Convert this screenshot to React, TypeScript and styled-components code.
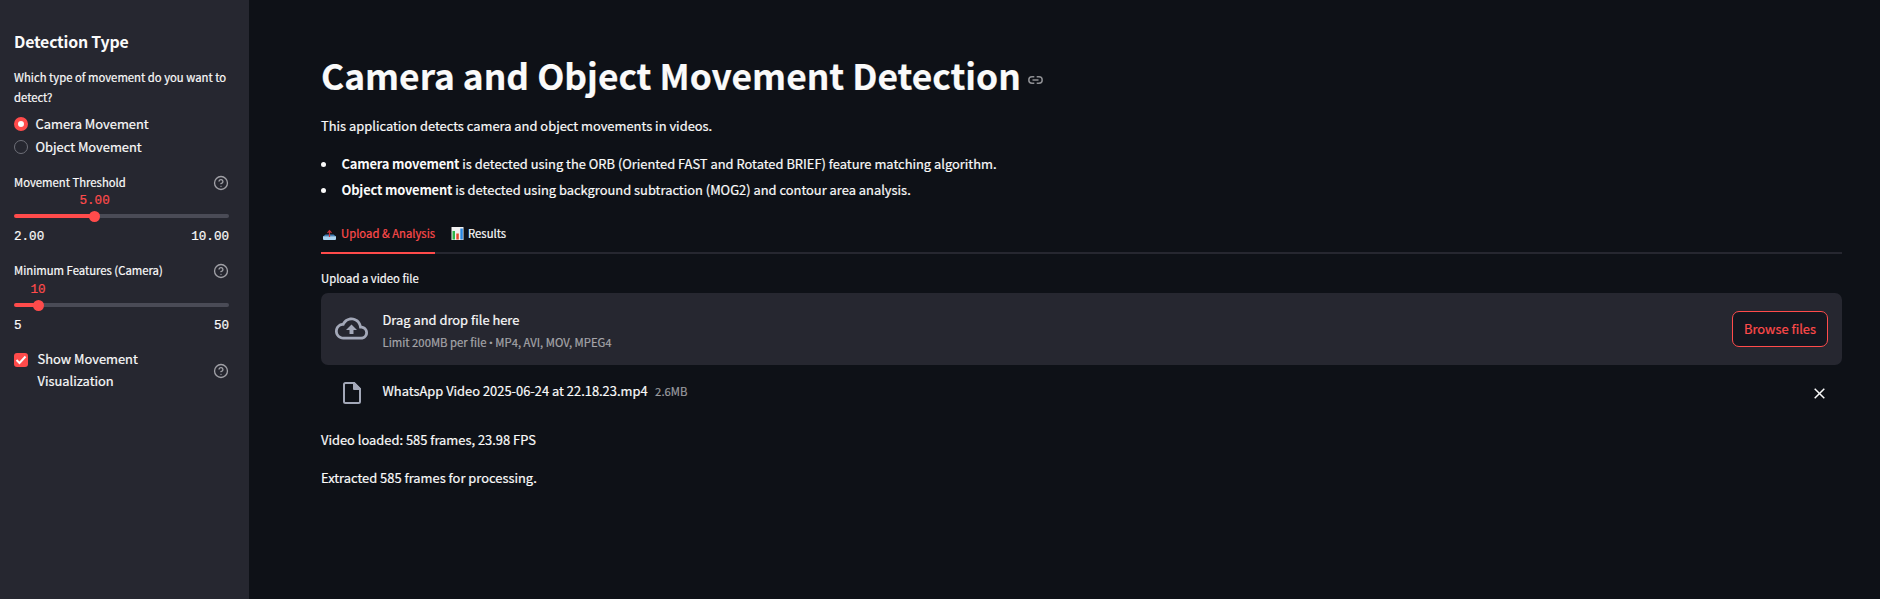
import React from "react";
import styled, { createGlobalStyle } from "styled-components";

const Global = createGlobalStyle`
  *, *::before, *::after { box-sizing: border-box; }
  html, body { margin: 0; background: #0e1117; }
  body {
    font-family: "Noto Sans CJK SC", "Open Sans", sans-serif;
    color: #fafafa;
    font-size: 12.9px;
    -webkit-text-stroke: 0.2px;
  }
  h1, h2, p, ul { margin: 0; padding: 0; font-weight: 400; }
`;

const Page = styled.div`
  display: flex;
  height: 599px;
  overflow: hidden;
`;

const Sidebar = styled.aside`
  width: 249px;
  flex: none;
  padding: 31px 20px 0 14px;
  background: #262730;
`;

const SideTitle = styled.h2`
  font-size: 15.9px;
  line-height: 22px;
  font-weight: 700;
  letter-spacing: -0.22px;
  -webkit-text-stroke: 0;
`;

const Label = styled.div`
  font-size: 11.3px;
  line-height: 20px;
`;

const Question = styled(Label)`
  margin-top: 14px;
`;

const Options = styled.div`
  margin-top: 5px;
`;

const Option = styled.div`
  display: flex;
  align-items: center;
  gap: 7.5px;
  height: 23px;
`;

const Radio = styled.span<{ $on?: boolean }>`
  width: 14px;
  height: 14px;
  border-radius: 50%;
  border: ${p => (p.$on ? "4px solid #ff4b4b" : "1px solid #6e6f78")};
  background: ${p => (p.$on ? "#fafafa" : "transparent")};
`;

const Sliders = styled.div`
  display: grid;
  gap: 16px;
  margin-top: 14px;
`;

const LabelRow = styled.div`
  display: flex;
  justify-content: space-between;
  align-items: center;
  height: 20px;
`;

const Value = styled.div<{ $at: number; $gap: number }>`
  width: ${p => p.$at * 2}px;
  margin-top: ${p => p.$gap}px;
  text-align: center;
  color: #ff4b4b;
  font: 12.6px/14px "Liberation Mono", monospace;
`;

const Track = styled.div<{ $at: number }>`
  display: flex;
  align-items: center;
  height: 4px;
  margin-top: 6px;
  border-radius: 2px;
  background: linear-gradient(to right, #ff4b4b ${p => p.$at}px, #4a4b56 ${p => p.$at}px);
`;

const Thumb = styled.span<{ $at: number }>`
  width: 11px;
  height: 11px;
  margin-left: ${p => p.$at - 5.5}px;
  border-radius: 50%;
  background: #ff4b4b;
`;

const Range = styled.div`
  display: flex;
  justify-content: space-between;
  margin-top: 12px;
  font: 12.6px/14px "Liberation Mono", monospace;
`;

const CheckRow = styled.div`
  display: flex;
  align-items: center;
  margin-top: 15px;
`;

const Check = styled.span`
  display: flex;
  align-self: flex-start;
  width: 14px;
  height: 14px;
  margin: 5px 9.5px 0 0;
  border-radius: 3px;
  background: #ff4b4b;
`;

const CheckLabel = styled.span`
  flex: 1;
  line-height: 22px;
`;

const HelpSvg = styled.svg`
  margin-top: 2px;
`;

const Main = styled.main`
  flex: 1;
  padding: 50px 38px 0 72px;
`;

const TitleRow = styled.div`
  display: flex;
  align-items: center;
  gap: 7px;
  height: 50px;
`;

const Title = styled.h1`
  font-size: 35.35px;
  line-height: 50px;
  font-weight: 700;
  -webkit-text-stroke: 0.2px;
`;

const LinkSvg = styled.svg`
  margin-top: 10px;
`;

const Text = styled.p<{ $top: number }>`
  margin-top: ${p => p.$top}px;
  line-height: 22px;
`;

const List = styled.ul`
  margin-top: 14px;
  list-style: none;
`;

const Item = styled.li`
  display: flex;
  align-items: center;
  line-height: 26px;
  white-space: pre;
  &::before {
    content: "";
    width: 5px;
    height: 5px;
    margin-right: 15.5px;
    border-radius: 50%;
    background: #fafafa;
  }
  b {
    letter-spacing: -0.18px;
    -webkit-text-stroke: 0;
  }
`;

const Tabs = styled.div`
  display: flex;
  gap: 16px;
  height: 40px;
  margin-top: 11px;
  border-bottom: 2px solid #262730;
`;

const Tab = styled.div<{ $on?: boolean }>`
  display: flex;
  align-items: center;
  gap: 4px;
  height: 40px;
  font-size: 11.3px;
  color: ${p => (p.$on ? "#ff4b4b" : "#fafafa")};
  border-bottom: 2px solid ${p => (p.$on ? "#ff4b4b" : "transparent")};
`;

const UploadLabel = styled(Label)`
  margin-top: 14px;
`;

const Dropzone = styled.div`
  display: flex;
  align-items: center;
  height: 72px;
  margin-top: 5px;
  padding: 0 14px;
  border-radius: 7px;
  background: #262730;
`;

const DropText = styled.div`
  flex: 1;
  margin-left: 14.5px;
  padding-top: 1px;
  line-height: 23px;
`;

const Hint = styled.div`
  font-size: 11.3px;
  height: 21px;
  line-height: 23px;
  color: #a5a5a9;
`;

const Bullet = styled.span`
  font-family: Roboto, sans-serif;
`;

const Browse = styled.button`
  width: 96px;
  height: 36px;
  padding: 0 0 1px;
  border: 1px solid #ff4b4b;
  border-radius: 7px;
  background: #131720;
  color: #ff4b4b;
  font: inherit;
`;

const FileRow = styled.div`
  display: flex;
  align-items: center;
  height: 22px;
  margin-top: 17px;
  padding: 0 17.5px 0 22px;
`;

const FileName = styled.span`
  margin: 0 0 6px 21.5px;
`;

const FileSize = styled.span`
  flex: 1;
  margin: 0 0 4px 7.5px;
  font-size: 11.3px;
  color: #9c9da0;
`;

const CloudSvg = styled.svg`
  margin-bottom: 2px;
`;

const HelpIcon = () => (
  <HelpSvg width="16" height="16" viewBox="0 0 24 24" fill="none" stroke="#a0a0a6" strokeWidth="2" strokeLinecap="round" strokeLinejoin="round">
    <circle cx="12" cy="12" r="9.7" />
    <path d="M9.09 9a3 3 0 0 1 5.83 1c0 2-3 3-3 3M12 17h.01" />
  </HelpSvg>
);

const CloudIcon = () => (
  <CloudSvg width="33" height="33" viewBox="0 0 24 24" fill="#a3a8b8">
    <path d="M19.35 10.04C18.67 6.59 15.64 4 12 4 9.11 4 6.6 5.64 5.35 8.04 2.34 8.36 0 10.91 0 14c0 3.31 2.69 6 6 6h13c2.76 0 5-2.24 5-5 0-2.64-2.05-4.78-4.65-4.96zM19 18H6c-2.21 0-4-1.79-4-4 0-2.05 1.53-3.76 3.56-3.97l1.07-.11.5-.95C8.08 7.14 9.94 6 12 6c2.62 0 4.88 1.86 5.39 4.43l.3 1.5 1.53.11c1.56.1 2.78 1.41 2.78 2.96 0 1.65-1.35 3-3 3zM8 13h2.55v3h2.9v-3H16l-4-4z" />
  </CloudSvg>
);

const FileIcon = () => (
  <svg width="18" height="22" viewBox="0 0 18 22" fill="none" stroke="#a3a8b8" strokeWidth="2" strokeLinejoin="round">
    <path d="M2.5 1H11l6 6v12.5a1.5 1.5 0 0 1-1.5 1.5h-13A1.5 1.5 0 0 1 1 19.5v-17A1.5 1.5 0 0 1 2.5 1z" />
    <path d="M11 1v6h6z" fill="#a3a8b8" />
  </svg>
);

const LinkIcon = () => (
  <LinkSvg width="15" height="8" viewBox="0 0 15 8" fill="none" stroke="#8e8f93" strokeWidth="1.5">
    <path d="M6.3.8H4a3.2 3.2 0 0 0 0 6.4h2.3M8.7.8H11a3.2 3.2 0 0 1 0 6.4H8.7M4.5 4h6" />
  </LinkSvg>
);

const CloseIcon = () => (
  <svg width="11" height="11" viewBox="0 0 11 11" stroke="#fafafa" strokeWidth="1.5">
    <path d="M.7.7l9.6 9.6M10.3.7L.7 10.3" />
  </svg>
);

const TrayIcon = () => (
  <svg width="16" height="14" viewBox="0 0 16 14">
    <path d="M4.5 8.500h8l2.500 2H2z" fill="#3f7fb8" />
    <path d="M2 10.300h13v2.700a1 1 0 0 1-1 1H3a1 1 0 0 1-1-1z" fill="#a9d3f2" />
    <path d="M8.500 11V5M6.500 6.800L8.500 4.700l2 2.100" stroke="#c8323a" strokeWidth="1.2" fill="none" />
  </svg>
);

const ChartIcon = () => (
  <svg width="13" height="13" viewBox="0 0 13 13">
    <path d="M.5 0h12v13H.5z" fill="#f2f2f2" />
    <path d="M1.500 4H4v8.500H1.500z" fill="#2fb34a" />
    <path d="M5.300 6.500h2.500v6H5.300z" fill="#e8492d" />
    <path d="M9.300 1.500h2.500v11H9.300z" fill="#2786e0" />
  </svg>
);

type SliderProps = { label: string; value: string; at: number; min: string; max: string; gap: number };

const SliderField = ({ label, value, at, min, max, gap }: SliderProps) => (
  <div>
    <LabelRow>
      <Label>{label}</Label>
      <HelpIcon />
    </LabelRow>
    <Value $at={at} $gap={gap}>{value}</Value>
    <Track $at={at}>
      <Thumb $at={at} />
    </Track>
    <Range>
      <span>{min}</span>
      <span>{max}</span>
    </Range>
  </div>
);

export default function App() {
  return (
    <>
      <Global />
      <Page>
        <Sidebar>
          <SideTitle>Detection Type</SideTitle>
          <Question>Which type of movement do you want to detect?</Question>
          <Options>
            <Option><Radio $on />Camera Movement</Option>
            <Option><Radio />Object Movement</Option>
          </Options>
          <Sliders>
            <SliderField label="Movement Threshold" value="5.00" at={80.6} min="2.00" max="10.00" gap={2} />
            <SliderField label="Minimum Features (Camera)" value="10" at={24} min="5" max="50" gap={3} />
          </Sliders>
          <CheckRow>
            <Check>
              <svg width="14" height="14" viewBox="0 0 14 14" fill="none" stroke="#fafafa" strokeWidth="2">
                <path d="M2.500 7l3 3 6-6.500" />
              </svg>
            </Check>
            <CheckLabel>Show Movement<br />Visualization</CheckLabel>
            <HelpIcon />
          </CheckRow>
        </Sidebar>
        <Main>
          <TitleRow>
            <Title>Camera and Object Movement Detection</Title>
            <LinkIcon />
          </TitleRow>
          <Text $top={15}>This application detects camera and object movements in videos.</Text>
          <List>
            <Item><b>Camera movement</b> is detected using the ORB (Oriented FAST and Rotated BRIEF) feature matching algorithm.</Item>
            <Item><b>Object movement</b> is detected using background subtraction (MOG2) and contour area analysis.</Item>
          </List>
          <Tabs>
            <Tab $on><TrayIcon />Upload &amp; Analysis</Tab>
            <Tab><ChartIcon />Results</Tab>
          </Tabs>
          <UploadLabel>Upload a video file</UploadLabel>
          <Dropzone>
            <CloudIcon />
            <DropText>
              Drag and drop file here
              <Hint>Limit 200MB per file <Bullet>•</Bullet> MP4, AVI, MOV, MPEG4</Hint>
            </DropText>
            <Browse>Browse files</Browse>
          </Dropzone>
          <FileRow>
            <FileIcon />
            <FileName>WhatsApp Video 2025-06-24 at 22.18.23.mp4</FileName>
            <FileSize>2.6MB</FileSize>
            <CloseIcon />
          </FileRow>
          <Text $top={25}>Video loaded: 585 frames, 23.98 FPS</Text>
          <Text $top={16}>Extracted 585 frames for processing.</Text>
        </Main>
      </Page>
    </>
  );
}
